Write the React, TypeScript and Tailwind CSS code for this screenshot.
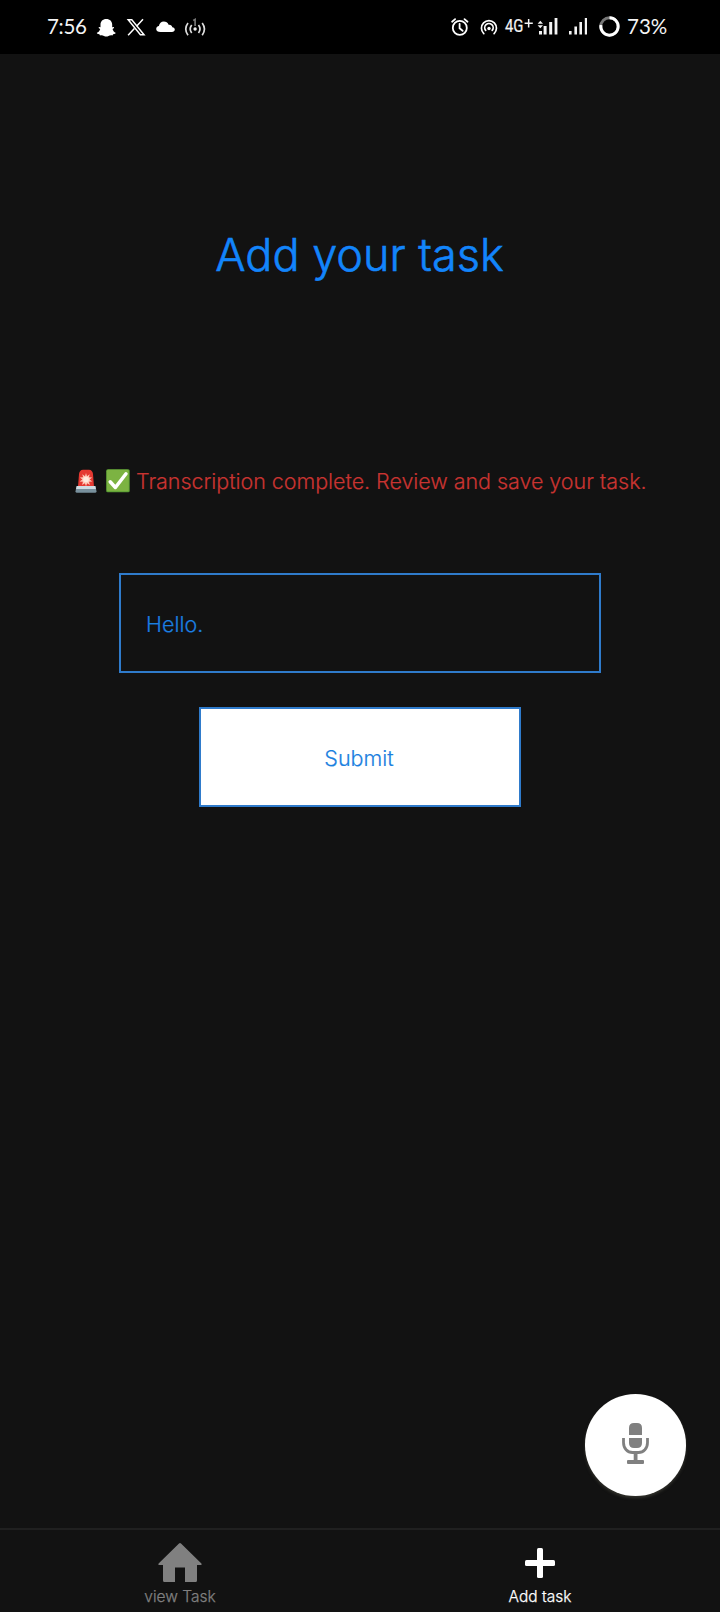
import React from "react";

function StatusBar() {
  return (
    <header className="flex h-[54px] shrink-0 justify-between bg-black pl-[47px] pr-[50px] font-['Lato',sans-serif] text-[20.5px] leading-[53px] text-[#f4f4f4]">
      <div className="flex">
        <span className="w-[49px] whitespace-nowrap tracking-[-0.3px]">7:56</span>
        <svg className="h-[54px] w-[24px]" viewBox="96 0 24 54" fill="#fff">
          <path d="M106.300 19c3.600 0 5.900 2.400 5.900 5.800v2.400l1.500-.3c.8.500.2 1.300-1.200 2 .6 2 1.800 3.300 3.100 3.800.4.800-1 1.300-2.500 1.500l-.6 1.200c-2-.4-3 .1-4 .6-1.500.8-3 .8-4.500 0-1-.5-2-1-4-.6l-.6-1.200c-1.500-.2-2.900-.7-2.500-1.500 1.500-.5 2.800-1.800 3.300-3.800-1.400-.7-2-1.500-1.200-2l1.500.3v-2.400c0-3.400 2.200-5.800 5.800-5.800z" />
        </svg>
        <svg className="h-[54px] w-[30px]" viewBox="120 0 30 54" fill="none" stroke="#fff">
          <path d="M128.200 19.800h3.600l12.200 14.900h-3.600z" strokeWidth="1.500" />
          <path d="M143 19.300l-6.400 7M134.400 28.500l-6.300 6.700" strokeWidth="1.500" />
        </svg>
        <svg className="h-[54px] w-[30px]" viewBox="150 0 30 54" fill="#fff">
          <path d="M160.500 32c-2.700 0-4.300-1.300-4.300-3.100 0-1.500 1.200-2.700 2.700-2.900.4-2.500 2.300-4.400 4.900-4.400 2.200 0 4 1.200 4.800 3.100 2.200-.2 3.400 1 3.700 2.500 1.500.1 2.500 1 2.500 2.300 0 1.500-1.200 2.500-2.900 2.500z" />
        </svg>
        <svg className="h-[54px] w-[30px]" viewBox="180 0 30 54" fill="none" stroke="#ddd" strokeWidth="1.700">
          <path d="M188 23q-4.500 6 0 12.300M202.200 23q4.500 6 0 12.300M191.700 25q-3 4 0 8M198.500 25q3 4 0 8" />
          <circle cx="195.100" cy="29" r="1.700" fill="#eee" stroke="none" />
          <path d="M193.200 20.500l1.900-1V26" stroke="#777" />
        </svg>
      </div>
      <div className="flex">
        <svg className="h-[54px] w-[30px]" viewBox="446 0 30 54" fill="none" stroke="#fff" strokeWidth="1.800" strokeLinecap="round">
          <circle cx="459.800" cy="27.900" r="7" />
          <path d="M459.600 23.800v4.500l3 2.500M452.100 21.700l3-2.600M467.500 21.700l-3-2.600" />
        </svg>
        <svg className="h-[54px] w-[29px]" viewBox="476 0 29 54" fill="none" stroke="#fff" strokeWidth="1.700" strokeLinecap="round">
          <path d="M483.800 33.600a7.500 7.500 0 1 1 10.300 0M485.700 30.400a4.200 4.200 0 1 1 6.500 0" />
          <circle cx="489" cy="28.500" r="1.700" fill="#fff" stroke="none" />
        </svg>
        <span className="relative w-[33px] font-['Roboto',sans-serif] text-[17.500px] [-webkit-text-stroke:0.2px]">
          <span className="absolute left-0 top-0 origin-left scale-x-[0.85]">4G</span>
        </span>
        <svg className="-ml-[15px] h-[54px] w-[64px]" viewBox="523 0 64 54" fill="#f4f4f4">
          <path d="M527.900 19h1.500v3.600h3.400v1.500h-3.400v3.500h-1.500v-3.500h-3.300v-1.500h3.300zM540.300 20.800l2.700 3h-5.400zM540.300 28.200l2.700-3h-5.400zM539 31h3v3.400h-3zM543.600 26h3v8.400h-3zM549.200 22h3v12.400h-3zM554.600 18h2.800v16.400h-2.800zM569 31h2.600v3.400H569zM574.400 26.500h2.600v7.900h-2.600zM579.400 22h2.600v12.400h-2.600zM584.800 18h2.200v16.400h-2.200z" />
        </svg>
        <svg className="h-[54px] w-[40px]" viewBox="587 0 40 54" fill="none" strokeWidth="2.900">
          <circle cx="609.500" cy="26.500" r="8.700" stroke="#777" />
          <path d="M609.500 17.800a8.700 8.700 0 1 1-8.600 7.200" stroke="#fff" />
        </svg>
        <span className="w-[43px] whitespace-nowrap">73%</span>
      </div>
    </header>
  );
}

function Siren() {
  return (
    <svg className="h-[24px] w-[24px] shrink-0" viewBox="0 0 24 24">
      <path d="M4 18L5 5Q5.500 1 9 .8h6Q18.500 1 19 5l1 13z" fill="#e53931" />
      <path d="M2.500 17.200h19l1 5q0 1.500-1.500 1.500H3q-1.500 0-1.500-1.500z" fill="#78909c" />
      <path d="M2.700 17h18.600l.6 3H2.100z" fill="#cfdce2" />
      <path d="M12 4l1 3.200 2.700-2-.8 3.100 3.200.1-2.500 2.100 2.700 2-3.300.3.900 3.100-2.800-1.700L12 17.300l-1.100-3.100L8 15.900l1-3.100-3.300-.3 2.700-2-2.500-2.100 3.200-.1-.8-3.100 2.700 2z" fill="#ffc9b8" />
      <circle cx="12" cy="10.500" r="2.800" fill="#ffe9dd" />
    </svg>
  );
}

function CheckMark() {
  return (
    <svg className="h-[24px] w-[24px] shrink-0" viewBox="0 0 24 24">
      <rect x=".2" y=".3" width="23.500" height="23" rx="1.500" fill="#5b9f35" />
      <rect x=".8" y=".8" width="22" height="21.500" rx="1.500" fill="#7cb342" />
      <path d="M4.200 12.800l5.200 5.700L20 4.800" fill="none" stroke="#fff" strokeWidth="3.500" strokeLinecap="round" strokeLinejoin="round" />
    </svg>
  );
}

export default function App() {
  return (
    <div className="flex h-[1612px] w-[720px] flex-col overflow-hidden bg-[#121212] font-['Inter',sans-serif]">
      <StatusBar />
      <main className="flex flex-1 flex-col items-center">
        <h1 className="mt-[169px] h-[65px] whitespace-nowrap pr-[1px] text-[45px] font-light leading-[64px] text-[#1285fb] [-webkit-text-stroke:0.6px]">Add your task</h1>
        <div className="mt-[177px] flex h-[32px] w-[572px] items-center text-[#c93431]">
          <Siren />
          <span className="w-[8px] shrink-0" />
          <CheckMark />
          <p className="ml-[6px] whitespace-nowrap text-[21.500px] font-light leading-[32px] tracking-[-0.05px] [-webkit-text-stroke:0.2px]">Transcription complete. Review and save your task.</p>
        </div>
        <div className="mt-[76px] flex h-[100px] w-[482px] items-center border-2 border-[#2f7bcb] pl-[25px] pt-[2px] text-[21.500px] font-light text-[#1b7fe0] [-webkit-text-stroke:0.2px]">Hello.</div>
        <button className="mt-[34px] h-[100px] w-[322px] border-2 border-[#2f7bcb] bg-white pr-[2px] pt-[2px] text-[21.500px] font-light text-[#1b7fe0] [-webkit-text-stroke:0.2px]">Submit</button>
        <button aria-label="Record" className="mb-[32px] mr-[34px] mt-auto h-[102px] w-[101px] self-end rounded-full bg-white shadow-[0_2px_3px_#32322c]">
          <svg className="h-[102px] w-[101px]" viewBox="585 1394 101 102" fill="#808080">
            <path d="M629 1435v-7q0-5 5-5h3q5 0 5 5v7zM629 1438h13v5q0 5-5 5h-3q-5 0-5-5z" />
            <path d="M623.500 1438v4.500c0 6 4 10 9 10h6c5 0 9-4 9-10V1438" fill="none" stroke="#808080" strokeWidth="2.800" />
            <path d="M633.700 1453h3.800v7h5.500q1 0 1 1v2q0 1-1 1h-15q-1 0-1-1v-2q0-1 1-1h5.700z" />
          </svg>
        </button>
      </main>
      <nav className="grid h-[84px] grid-cols-2 border-t-2 border-[#202020] text-[15.500px] font-light leading-[22px] [-webkit-text-stroke:0.25px]">
        <a className="flex flex-col items-center text-[#808080]">
          <svg className="mt-[12px] h-[44px] w-[48px]" viewBox="156 1542 48 44" fill="#808080">
            <path d="M179 1543.500q1-.8 2 0l20.400 20q.9 1-.4 1.500h-4v15.500q0 1.500-1.500 1.500H185v-14.500h-10V1582h-10.500q-1.500 0-1.500-1.500V1565h-4q-1.300-.5-.4-1.500z" />
          </svg>
          <span>view Task</span>
        </a>
        <a className="flex flex-col items-center text-white">
          <svg className="mt-[12px] h-[44px] w-[48px]" viewBox="516 1542 48 44" fill="#fff">
            <rect x="537" y="1548" width="6" height="30" rx="1.500" />
            <rect x="525" y="1560" width="30" height="6" rx="1.500" />
          </svg>
          <span>Add task</span>
        </a>
      </nav>
    </div>
  );
}
